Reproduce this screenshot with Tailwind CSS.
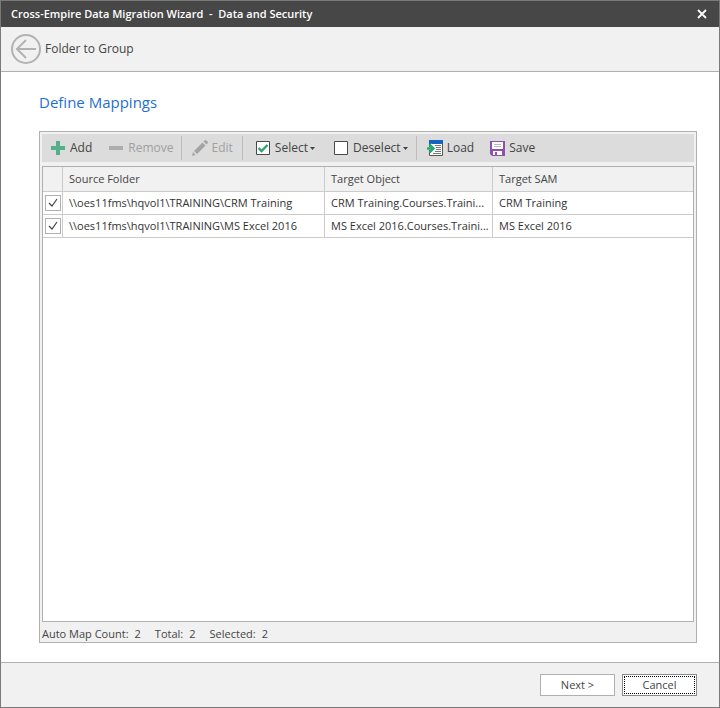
<!DOCTYPE html>
<html lang="en">
<head>
    <meta charset="UTF-8">
    <meta name="viewport" content="width=device-width, initial-scale=1.0">
    <title>Cross-Empire Data Migration Wizard</title>
    <script src="https://cdn.jsdelivr.net/npm/@tailwindcss/browser@4"></script>
</head>
<body class="font-['Open_Sans','Noto_Sans',sans-serif] text-[11px] leading-4 text-[#444444]">
    <div class="min-h-screen flex flex-col bg-white border border-[#7a7a7a]">
        <!-- Title bar -->
        <header class="flex items-center justify-between h-[26px] pl-[10px] pr-3 bg-[#474747] text-white">
            <h1 class="font-semibold whitespace-pre">Cross-Empire Data Migration Wizard  -  Data and Security</h1>
            <button type="button" aria-label="Close" class="p-0">
                <svg class="w-[10px] h-[10px]" viewBox="0 0 10 10" fill="none" stroke="currentColor" stroke-width="1.8"><path d="M1 1l8 8M9 1l-8 8"/></svg>
            </button>
        </header>

        <!-- Step bar -->
        <nav class="flex items-center gap-1 h-[45px] px-[10px] bg-[#f1f1f1] border-b border-[#b0b0b0] text-xs">
            <button type="button" aria-label="Back">
                <svg class="w-[30px] h-[30px]" viewBox="0 0 30 30" fill="none" stroke="#b2b2b2" stroke-width="2">
                    <circle cx="15" cy="15" r="14"/>
                    <path d="M25 15H6M15 6l-9 9 9 9"/>
                </svg>
            </button>
            <span>Folder to Group</span>
        </nav>

        <main class="grow flex flex-col pl-[38px] pr-[22px] pt-[18px] pb-[19px]">
            <h2 class="text-[15px] leading-6 text-[#1f6fd0] mb-[17px]">Define Mappings</h2>

            <section class="grow flex flex-col bg-[#f1f1f1] border border-[#b0b0b0] p-[2px] pb-0">
                <!-- Toolbar -->
                <div class="flex items-center h-7 pl-[9px] mb-1 bg-[#dcdcdc] text-xs">
                    <button type="button" class="flex items-center gap-[5px]">
                        <svg class="w-[14px] h-[14px]" viewBox="0 0 14 14" fill="#53b08a"><path d="M5 0h4v5h5v4H9v5H5V9H0V5h5z"/></svg>
                        Add
                    </button>
                    <button type="button" disabled class="flex items-center gap-[5px] ml-[17px] text-[#a0a0a0]">
                        <svg class="w-[14px] h-[14px]" viewBox="0 0 14 14" fill="#adadad"><path d="M0 5h14v4H0z"/></svg>
                        Remove
                    </button>
                    <span class="w-px h-6 ml-[7px] bg-[#bdbdbd]"></span>
                    <button type="button" disabled class="flex items-center gap-1 ml-[10px] text-[#a0a0a0]">
                        <svg class="w-4 h-4" viewBox="0 0 16 16" fill="#a3a3a3"><path d="M0 16l1-4 2.500 3zM2 11l8.500-8.500 3 3L5 14zM11.500 1.500L12.500.5q1-.8 2 0l1 1q.8 1 0 2L14.500 4.500z"/></svg>
                        Edit
                    </button>
                    <span class="w-px h-6 ml-[9px] bg-[#bdbdbd]"></span>
                    <button type="button" class="flex items-center ml-[13px]">
                        <svg class="w-[14px] h-[14px] mr-[5px]" viewBox="0 0 14 14" fill="#fff" stroke="#4a4a4a"><path d="M.5.5h13v13H.5z"/><path d="M2.500 7l3 3 6-6" fill="none" stroke="#2fa36f" stroke-width="2.400"/></svg>
                        Select
                        <svg class="w-[5px] h-[3px] ml-[2px]" viewBox="0 0 5 3" fill="#444444"><path d="M0 0h5L2.500 3z"/></svg>
                    </button>
                    <button type="button" class="flex items-center ml-[19px]">
                        <svg class="w-[14px] h-[14px] mr-[5px]" viewBox="0 0 14 14" fill="#fff" stroke="#4a4a4a"><path d="M.5.5h13v13H.5z"/></svg>
                        Deselect
                        <svg class="w-[5px] h-[3px] ml-[2px]" viewBox="0 0 5 3" fill="#444444"><path d="M0 0h5L2.500 3z"/></svg>
                    </button>
                    <span class="w-px h-6 ml-2 bg-[#bdbdbd]"></span>
                    <button type="button" class="flex items-center gap-1 ml-[10px]">
                        <svg class="w-4 h-4" viewBox="0 0 16 16" fill="none">
                            <path d="M2.500 1h13v14.500h-13z" fill="#fff" stroke="#555"/>
                            <path d="M2 0h14v4H2z" fill="#1565c0"/>
                            <path d="M8 5.500h6M9 7.500h5M9 9.500h5M8 11.500h6M6 13.500h8" stroke="#777"/>
                            <path d="M0 8.500h6M3.500 4.500l4 4-4 4" stroke="#fff" stroke-width="3"/>
                            <path d="M0 8.500h6M2.500 4.500l4 4-4 4" stroke="#22a86b" stroke-width="2.400"/>
                        </svg>
                        Load
                    </button>
                    <button type="button" class="flex items-center gap-1 ml-4">
                        <svg class="w-[15px] h-[15px]" viewBox="0 0 15 15">
                            <path d="M0 0h15v15H2l-2-2z" fill="#8e4fb0"/>
                            <path d="M2 1h11v7H2zM3 10h9v4H3z" fill="#fff"/>
                            <path d="M4 3h7v1H4zM4 5h7v1H4z" fill="#b9b9b9"/>
                            <path d="M5 11h2v3H5z" fill="#8e4fb0"/>
                        </svg>
                        Save
                    </button>
                </div>

                <!-- Mappings -->
                <div class="grow bg-white border border-[#b0b0b0]">
                    <table class="w-full table-fixed border-separate border-spacing-0 text-[#333333]">
                        <colgroup><col class="w-5"><col class="w-[262px]"><col class="w-[168px]"><col></colgroup>
                        <thead>
                            <tr class="h-[25px] bg-[#f1f1f1] text-left text-[#444444]">
                                <th class="p-0 border-r border-b border-[#cccccc]" aria-label="Selected"></th>
                                <th class="py-0 pl-[6px] pr-[2px] font-normal border-r border-b border-[#cccccc]">Source Folder</th>
                                <th class="py-0 pl-[6px] pr-[2px] font-normal border-r border-b border-[#cccccc]">Target Object</th>
                                <th class="py-0 pl-[6px] pr-[2px] font-normal border-b border-[#cccccc]">Target SAM</th>
                            </tr>
                        </thead>
                        <tbody>
                            <tr class="h-[23px]">
                                <td class="p-0 border-r border-b border-[#cccccc]">
                                    <label class="relative block w-4 h-4 mx-auto">
                                        <input type="checkbox" checked aria-label="CRM Training" class="peer block appearance-none w-4 h-4 bg-white border border-[#b0b0b0]">
                                        <svg class="absolute inset-0 w-4 h-4 pointer-events-none invisible peer-checked:visible" viewBox="0 0 16 16" fill="none" stroke="#444444" stroke-width="1.200"><path d="M4 8l3 3 5-7"/></svg>
                                    </label>
                                </td>
                                <td class="py-0 pl-[6px] pr-[2px] truncate border-r border-b border-[#cccccc]">\\oes11fms\hqvol1\TRAINING\CRM Training</td>
                                <td class="py-0 pl-[6px] pr-[2px] truncate border-r border-b border-[#cccccc]">CRM Training.Courses.Traini...</td>
                                <td class="py-0 pl-[6px] pr-[2px] truncate border-b border-[#cccccc]">CRM Training</td>
                            </tr>
                            <tr class="h-[23px]">
                                <td class="p-0 border-r border-b border-[#cccccc]">
                                    <label class="relative block w-4 h-4 mx-auto">
                                        <input type="checkbox" checked aria-label="MS Excel 2016" class="peer block appearance-none w-4 h-4 bg-white border border-[#b0b0b0]">
                                        <svg class="absolute inset-0 w-4 h-4 pointer-events-none invisible peer-checked:visible" viewBox="0 0 16 16" fill="none" stroke="#444444" stroke-width="1.200"><path d="M4 8l3 3 5-7"/></svg>
                                    </label>
                                </td>
                                <td class="py-0 pl-[6px] pr-[2px] truncate border-r border-b border-[#cccccc]">\\oes11fms\hqvol1\TRAINING\MS Excel 2016</td>
                                <td class="py-0 pl-[6px] pr-[2px] truncate border-r border-b border-[#cccccc]">MS Excel 2016.Courses.Traini...</td>
                                <td class="py-0 pl-[6px] pr-[2px] truncate border-b border-[#cccccc]">MS Excel 2016</td>
                            </tr>
                        </tbody>
                    </table>
                </div>

                <div class="flex items-center gap-[14px] h-5 pt-1">
                    <span class="flex gap-[6px]"><span>Auto Map Count:</span><span>2</span></span>
                    <span class="flex gap-[6px]"><span>Total:</span><span>2</span></span>
                    <span class="flex gap-[6px]"><span>Selected:</span><span>2</span></span>
                </div>
            </section>
        </main>

        <footer class="flex items-center justify-end gap-[7px] h-[45px] pr-[22px] bg-[#f1f1f1] border-t border-[#b0b0b0]">
            <button type="button" class="w-[75px] h-[22px] bg-white border border-[#b0b0b0]">Next &gt;</button>
            <button type="button" class="w-[75px] h-[22px] p-px bg-white border border-[#8a8a8a]">
                <span class="flex items-center justify-center h-full border border-dotted border-black">Cancel</span>
            </button>
        </footer>
    </div>
</body>
</html>
